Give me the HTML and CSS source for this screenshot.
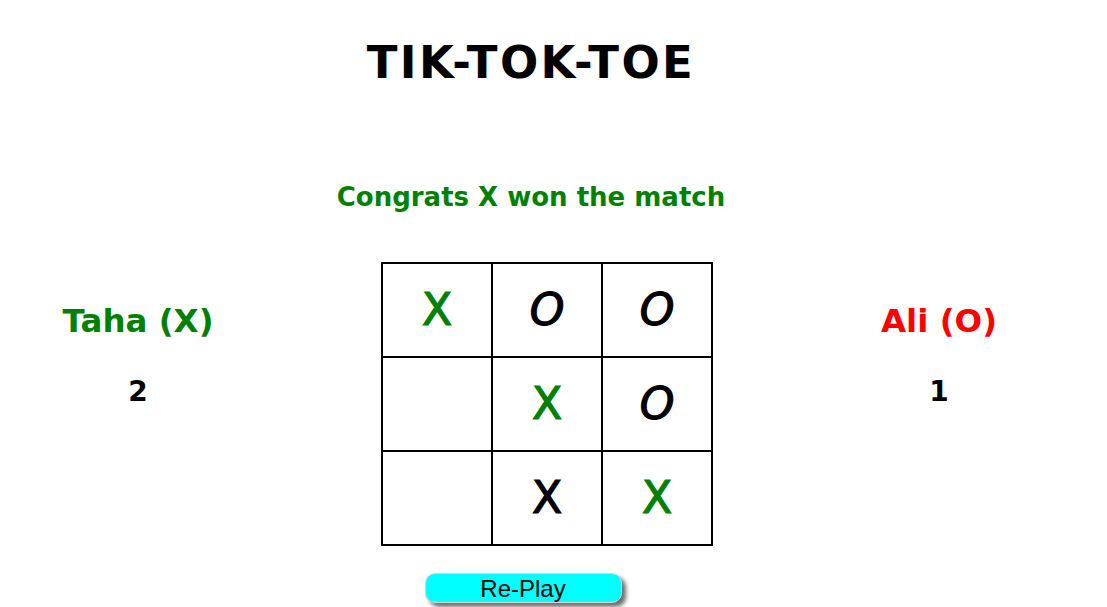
FILE: index.html
```html
<!DOCTYPE html>
<html>
<head>
<meta charset="utf-8">
<title>TIK-TOK-TOE</title>
<link rel="stylesheet" href="styles.css">
</head>
<body>
  <div class="top">
    <h1 class="title">TIK-TOK-TOE</h1>
    <p class="message">Congrats X won the match</p>
  </div>
  <div class="game">
    <div class="player player-x">
      <div class="name">Taha (X)</div>
      <div class="score">2</div>
    </div>
    <div class="board">
      <div class="cell x win">X</div>
      <div class="cell o">O</div>
      <div class="cell o">O</div>
      <div class="cell"></div>
      <div class="cell x win">X</div>
      <div class="cell o">O</div>
      <div class="cell"></div>
      <div class="cell x">X</div>
      <div class="cell x win">X</div>
    </div>
    <div class="player player-o">
      <div class="name">Ali (O)</div>
      <div class="score">1</div>
    </div>
  </div>
  <div class="actions">
    <button class="replay">Re-Play</button>
  </div>
</body>
</html>
```
FILE: styles.css
```css
html, body {
  margin: 0;
  padding: 0;
  background: #ffffff;
}
body {
  font-family: "Comic Sans MS", "DejaVu Sans", sans-serif;
  font-weight: bold;
  color: #000;
  width: 1107px;
  height: 607px;
  overflow: hidden;
}
.top {
  width: 1062px;
  text-align: center;
}
.title {
  margin: 0;
  padding-top: 37px;
  font-size: 45px;
  line-height: 52px;
  letter-spacing: 2.4px;
}
.message {
  margin: 0;
  padding-top: 90px;
  color: #008000;
  font-size: 26px;
  line-height: 36px;
}
.game {
  display: flex;
  align-items: flex-start;
  margin-top: 47px;
}
.player {
  text-align: center;
}
.player-x {
  width: 276px;
}
.player-o {
  width: 236px;
  margin-left: 108px;
}
.name {
  margin-top: 39px;
  font-size: 32.5px;
  line-height: 40px;
}
.player-x .name { color: #008000; }
.player-o .name { color: #ff0000; }
.score {
  margin-top: 36px;
  font-size: 28px;
  line-height: 30px;
  color: #000;
}
.board {
  margin-left: 105px;
  display: grid;
  grid-template-columns: repeat(3, 108px);
  grid-template-rows: repeat(3, 92px);
  gap: 2px;
  padding: 2px;
  background: #000;
}
.cell {
  background: #fff;
  display: flex;
  align-items: center;
  justify-content: center;
  font-size: 44px;
  font-weight: normal;
  line-height: 1;
  -webkit-text-stroke: 1.2px currentColor;
}
.cell.x {
  color: #000;
}
.cell.x.win {
  color: #008000;
}
.cell.o {
  font-style: italic;
}
.actions {
  width: 1046px;
  display: flex;
  justify-content: center;
  margin-top: 27px;
}
.replay {
  width: 197px;
  height: 30px;
  padding: 0;
  background: #00ffff;
  border: 1px solid #d6d6d6;
  border-radius: 10px;
  box-shadow: 4px 4px 4px #6e6e6e;
  font-family: "Liberation Sans", Arial, sans-serif;
  font-size: 24px;
  line-height: 30px;
  color: #000;
  font-weight: normal;
}
```
